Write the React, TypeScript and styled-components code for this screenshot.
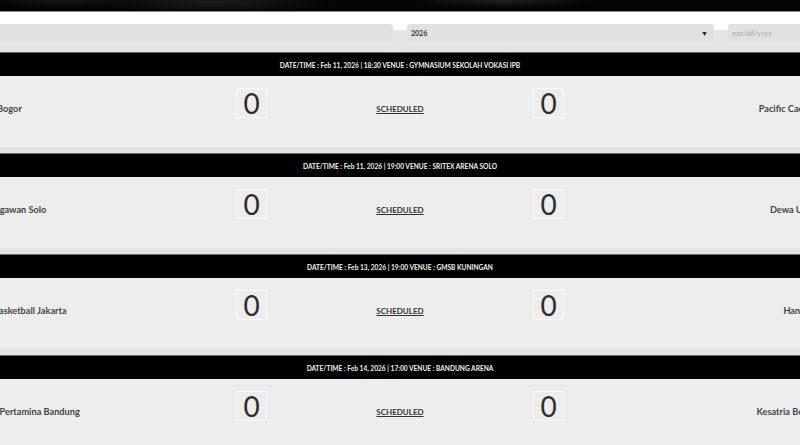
import styled, { createGlobalStyle } from "styled-components";

const GlobalStyle = createGlobalStyle`
  html, body {
    margin: 0;
    padding: 0;
    background: #ededed;
    overflow: hidden;
  }
  body {
    font-family: "Lato", "Open Sans", sans-serif;
  }
`;

const Page = styled.div`
  width: 1034px;
  margin-left: -117px;
`;

const Hero = styled.div`
  height: 11px;
  background:
    radial-gradient(ellipse 120px 10px at 330px 2px, #1c1c1c, transparent),
    radial-gradient(ellipse 90px 8px at 620px 0px, #202020, transparent),
    radial-gradient(ellipse 70px 8px at 180px 0px, #181818, transparent),
    #050505;
  border-bottom: 1px solid #8a8a8a;
`;

const Filters = styled.div`
  display: grid;
  grid-template-columns: 510px 307px 1fr;
  gap: 14px;
  padding: 12px 0 11px 0;
  background: linear-gradient(to bottom, #fff 18px, #e5e5e5 18px);
`;

const Select = styled.div`
  height: 17px;
  background: #e1e1e1;
  border-radius: 3px;
  display: flex;
  align-items: center;
  justify-content: space-between;
  padding: 0 6px 0 4px;
  font-size: 7px;
  font-weight: 700;
  color: #333;

  &::after {
    content: "▼";
    font-size: 7px;
    color: #222;
  }
`;

const DateInput = styled.div`
  height: 17px;
  background: #e1e1e1;
  border-radius: 3px;
  display: flex;
  align-items: center;
  padding-left: 4px;
  font-size: 7px;
  color: #a8a8a8;
`;

const MatchHeader = styled.div`
  height: 23px;
  background: #000;
  border-top: 1px solid #6a6a6a;
  display: flex;
  align-items: center;
  justify-content: center;
  color: #f4f1e6;
  font-size: 6.6px;
  font-weight: 700;
`;

const MatchBody = styled.div`
  display: grid;
  grid-template-columns: 200px 1fr 266px 1fr 200px;
  height: 71px;
  background: #ededed;
  border-bottom: 6px solid #e4e4e4;
`;

const Team = styled.div<{ $side: "home" | "away" }>`
  display: flex;
  align-items: center;
  justify-content: ${(p) => (p.$side === "home" ? "flex-start" : "flex-end")};
  padding: ${(p) => (p.$side === "home" ? "0 0 0 65px" : "0 62px 0 0")};
  height: 65px;
  font-size: 9.2px;
  font-weight: 700;
  color: #444;
  white-space: nowrap;
`;

const Score = styled.div<{ $side: "home" | "away" }>`
  justify-self: ${(p) => (p.$side === "home" ? "end" : "start")};
  margin-top: 12px;
  width: 29px;
  height: 28px;
  border: 1px solid #fafafa;
  display: flex;
  align-items: center;
  justify-content: center;
  font-size: 28px;
  color: #2e2e2e;
`;

const Status = styled.a`
  justify-self: center;
  align-self: start;
  margin-top: 28px;
  font-size: 8px;
  font-weight: 700;
  color: #333;
  text-decoration: underline;
`;

type Match = {
  date: string;
  time: string;
  venue: string;
  home: string;
  away: string;
};

const matches: Match[] = [
  {
    date: "Feb 11, 2026",
    time: "18:30",
    venue: "GYMNASIUM SEKOLAH VOKASI IPB",
    home: "Rans Simba Bogor",
    away: "Pacific Caesar Surabaya",
  },
  {
    date: "Feb 11, 2026",
    time: "19:00",
    venue: "SRITEX ARENA SOLO",
    home: "Kesatria Bengawan Solo",
    away: "Dewa United Banten",
  },
  {
    date: "Feb 13, 2026",
    time: "19:00",
    venue: "GMSB KUNINGAN",
    home: "Pelita Jaya Basketball Jakarta",
    away: "Hangtuah Jakarta",
  },
  {
    date: "Feb 14, 2026",
    time: "17:00",
    venue: "BANDUNG ARENA",
    home: "Satria Muda Pertamina Bandung",
    away: "Kesatria Bengawan Solo",
  },
];

export default function App() {
  return (
    <>
      <GlobalStyle />
      <Page>
        <Hero />
        <Filters>
          <Select />
          <Select>2026</Select>
          <DateInput>mm/dd/yyyy</DateInput>
        </Filters>
        {matches.map((m, i) => (
          <div key={i}>
            <MatchHeader>
              DATE/TIME : {m.date} | {m.time} VENUE : {m.venue}
            </MatchHeader>
            <MatchBody>
              <Team $side="home">{m.home}</Team>
              <Score $side="home">0</Score>
              <Status href="#">SCHEDULED</Status>
              <Score $side="away">0</Score>
              <Team $side="away">{m.away}</Team>
            </MatchBody>
          </div>
        ))}
      </Page>
    </>
  );
}
